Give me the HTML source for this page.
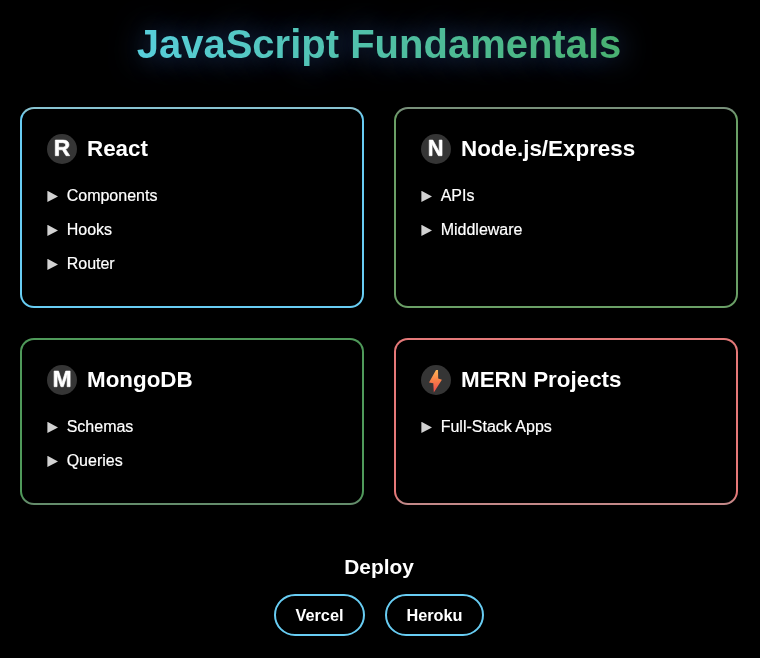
<!DOCTYPE html>
<html><head><meta charset="utf-8">
<style>
*{box-sizing:border-box;margin:0;padding:0}
html,body{width:760px;height:658px;background:#000;overflow:hidden}
body{font-family:"Liberation Sans",sans-serif;color:#fff;position:relative}
.card,.dep,.btn{will-change:transform}
h1{position:absolute;left:0;width:758px;top:21px;text-align:center;font-size:40px;line-height:46px;font-weight:bold;
background:linear-gradient(90deg,#5cd7fa 0%,#44a852 100%);-webkit-background-clip:text;background-clip:text;color:transparent;-webkit-text-fill-color:transparent;}
h1 span{}
.glow{position:absolute;left:0;width:758px;top:21px;text-align:center;font-size:40px;line-height:46px;font-weight:bold;color:transparent;text-shadow:0 0 30px rgba(90,150,255,0.5)}
.card{position:absolute;width:344px;border-radius:14px;padding:2px}
.in{width:100%;height:100%;background:#000;border-radius:12px;padding:25px}
.hd{display:flex;align-items:center;height:30px;margin-bottom:15px}
.ic{width:30px;height:30px;border-radius:50%;background:#353535;display:flex;align-items:center;justify-content:center;font-weight:bold;font-size:23px;margin-right:10px}
.hd b{font-size:22.4px}
.it{height:34px;display:flex;align-items:center;font-size:16px;-webkit-text-stroke:0.2px #fff}
.it i{display:inline-block;position:relative;top:0.4px;width:10.6px;height:11.2px;background:#d2d2d2;clip-path:polygon(0 0,100% 50%,0 100%);margin-right:8.7px;margin-left:0.4px;flex:none}
.dep{position:absolute;left:0;width:758px;top:554.6px;line-height:24px;text-align:center;font-size:20.9px;font-weight:bold}
.btn{position:absolute;top:594px;height:42px;border:2px solid #68cdf3;border-radius:21px;font-weight:bold;font-size:16.3px;display:flex;align-items:center;justify-content:center}
</style></head><body>
<div class="glow">JavaScript Fundamentals</div>
<h1><span>JavaScript Fundamentals</span></h1>
<div class="card" style="left:20px;top:107px;height:201px;background:linear-gradient(180deg,#88c3d1 0,#88c3d1 3px,#68cdf3 9px,#68cdf3 calc(100% - 9px),#68cdf3 calc(100% - 3px),#68cdf3 100%)"><div class="in">
 <div class="hd"><div class="ic"><svg width="30" height="30" viewBox="0 0 30 30" style="display:block"><path fill="#fff" stroke="#fff" stroke-width="0.7" d="M19.04 21.68 15.42 15.76H11.59V21.68H8.32V6.1H16.11Q18.9 6.1 20.42 7.3Q21.94 8.5 21.94 10.74Q21.94 12.38 21.01 13.57Q20.08 14.76 18.49 15.13L22.71 21.68ZM18.65 10.88Q18.65 8.63 15.77 8.63H11.59V13.23H15.86Q17.23 13.23 17.94 12.61Q18.65 11.99 18.65 10.88Z"/></svg></div><b>React</b></div>
 <div class="it"><i></i>Components</div><div class="it"><i></i>Hooks</div><div class="it"><i></i>Router</div>
</div></div>
<div class="card" style="left:394px;top:107px;height:201px;background:linear-gradient(180deg,#78907a 0,#78907a 3px,#6a9f66 9px,#6a9f66 calc(100% - 9px),#6a9f66 calc(100% - 3px),#6a9f66 100%)"><div class="in">
 <div class="hd"><div class="ic"><svg width="30" height="30" viewBox="0 0 30 30" style="display:block"><path fill="#fff" stroke="#fff" stroke-width="0.7" d="M17.35 21.68 10.85 9.68Q11.04 11.43 11.04 12.49V21.68H8.27V6.1H11.84L18.43 18.2Q18.24 16.53 18.24 15.16V6.1H21.01V21.68Z"/></svg></div><b>Node.js/Express</b></div>
 <div class="it"><i></i>APIs</div><div class="it"><i></i>Middleware</div>
</div></div>
<div class="card" style="left:20px;top:338px;height:167px;background:linear-gradient(180deg,#4f9a5a 0,#4f9a5a 3px,#4f9a5a 9px,#4f9a5a calc(100% - 9px),#648c6b calc(100% - 3px),#648c6b 100%)"><div class="in">
 <div class="hd"><div class="ic"><svg width="30" height="30" viewBox="0 0 30 30" style="display:block"><path fill="#fff" stroke="#fff" stroke-width="0.7" d="M20.16 21.68V12.24Q20.16 11.92 20.17 11.6Q20.17 11.27 20.27 8.84Q19.48 11.82 19.11 12.99L16.28 21.68H13.94L11.11 12.99L9.92 8.84Q10.06 11.41 10.06 12.24V21.68H7.14V6.1H11.54L14.34 14.81L14.59 15.65L15.12 17.74L15.82 15.24L18.71 6.1H23.08V21.68Z"/></svg></div><b>MongoDB</b></div>
 <div class="it"><i></i>Schemas</div><div class="it"><i></i>Queries</div>
</div></div>
<div class="card" style="left:394px;top:338px;height:167px;background:linear-gradient(180deg,#e47979 0,#e47979 3px,#e67878 9px,#e67878 calc(100% - 9px),#c38888 calc(100% - 3px),#c38888 100%)"><div class="in">
 <div class="hd"><div class="ic"><svg width="30" height="30" viewBox="0 0 30 30" style="display:block"><defs><linearGradient id="g" x1="0" y1="0" x2="0" y2="1"><stop offset="0" stop-color="#fcb658"/><stop offset="0.42" stop-color="#f98548"/><stop offset="0.8" stop-color="#f05a4c"/><stop offset="1" stop-color="#ec4c4a"/></linearGradient></defs><path d="M15.0 4.9 L17.0 4.9 L17.2 13.5 L20.9 14.7 L12.8 27.6 L12.3 18.3 L8.0 17.6 Z" fill="url(#g)"/></svg></div><b>MERN Projects</b></div>
 <div class="it"><i></i>Full-Stack Apps</div>
</div></div>
<div class="dep">Deploy</div>
<div class="btn" style="left:274px;width:91px">Vercel</div>
<div class="btn" style="left:385px;width:99px">Heroku</div>
</body></html>
